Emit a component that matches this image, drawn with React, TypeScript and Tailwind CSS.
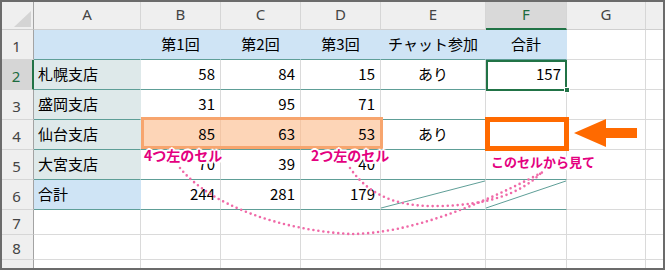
import React from 'react';

type Fill = 'none' | 'blue' | 'side' | 'peach';
type Align = 'l' | 'c' | 'r';
type C = [string, Align, Fill];

const fillCls: Record<Fill, string> = {
  none: 'bg-white border-r-[#dadada]',
  blue: 'bg-[#cfe4f5] border-r-[#cfe4f5]',
  side: 'bg-[#dee9ea] border-r-[#dee9ea]',
  peach: 'bg-[#fdd5b7] border-r-[#f2c6a6]',
};

const alignCls: Record<Align, string> = {
  l: 'justify-start pl-1',
  c: 'justify-center',
  r: 'justify-end pr-[5px]',
};

// H is only a sliver at the right edge, its letter falls outside
const cols = ['A', 'B', 'C', 'D', 'E', 'F', 'G', ''];

const rows: C[][] = [
  [['', 'l', 'blue'], ['第1回', 'c', 'blue'], ['第2回', 'c', 'blue'], ['第3回', 'c', 'blue'], ['チャット参加', 'c', 'blue'], ['合計', 'c', 'blue']],
  [['札幌支店', 'l', 'side'], ['58', 'r', 'none'], ['84', 'r', 'none'], ['15', 'r', 'none'], ['あり', 'c', 'none'], ['157', 'r', 'none']],
  [['盛岡支店', 'l', 'side'], ['31', 'r', 'none'], ['95', 'r', 'none'], ['71', 'r', 'none'], ['', 'c', 'none'], ['', 'r', 'none']],
  [['仙台支店', 'l', 'side'], ['85', 'r', 'peach'], ['63', 'r', 'peach'], ['53', 'r', 'peach'], ['あり', 'c', 'none'], ['', 'r', 'none']],
  [['大宮支店', 'l', 'side'], ['70', 'r', 'none'], ['39', 'r', 'none'], ['40', 'r', 'none'], ['', 'c', 'none'], ['', 'r', 'none']],
  [['合計', 'l', 'blue'], ['244', 'r', 'none'], ['281', 'r', 'none'], ['179', 'r', 'none'], ['', 'c', 'none'], ['', 'r', 'none']],
];

const head = 'flex items-center justify-center bg-[#efefef] border-r border-b border-r-[#d6d6d6] border-b-[#cfcfcf] text-[#444] text-[15px] font-["Noto_Sans",sans-serif]';
const rowHead = 'flex items-center justify-center bg-[#efefef] border-r border-b border-r-[#a3a3a3] border-b-[#d6d6d6] text-[#444] text-[15px] font-["Noto_Sans",sans-serif] pt-[3px]';
const plain = 'border-r border-b border-r-[#dadada] border-b-[#dadada] bg-white';
const halo = '[text-shadow:-1.5px_-1.5px_0_#fff,1.5px_-1.5px_0_#fff,-1.5px_1.5px_0_#fff,1.5px_1.5px_0_#fff,0_2px_0_#fff,0_-2px_0_#fff,2px_0_0_#fff,-2px_0_0_#fff]';
const label = `absolute font-bold leading-none text-[#e4007f] ${halo}`;

const Diagonal: React.FC = () => (
  <svg className="absolute inset-0 h-full w-full" viewBox="0 0 100 30" preserveAspectRatio="none">
    <line x1="0" y1="29" x2="100" y2="1" stroke="#5e9e97" strokeWidth="1" vectorEffect="non-scaling-stroke" />
  </svg>
);

const App: React.FC = () => {
  return (
    <div className="relative w-[665px] h-[270px] overflow-hidden bg-white font-['Noto_Sans_CJK_JP',sans-serif] text-[15px] text-black">
      <div className="grid grid-cols-[34px_107px_80px_80px_80px_105px_81px_79px_1fr] grid-rows-[30px_30px_30px_30px_30px_30px_30px_25px_25px_1fr] h-full">
        {/* corner */}
        <div className="relative bg-[#efefef] border-r border-b border-r-[#a3a3a3] border-b-[#cfcfcf]">
          <svg className="absolute left-[14px] top-[11px]" width="18" height="17" viewBox="0 0 18 17">
            <polygon points="17,0 17,16 0,16" fill="#d4d4d4" />
          </svg>
        </div>
        {cols.map((c, i) =>
          c === 'F' ? (
            <div key={i} className="flex items-center justify-center bg-[#d9d9d9] border-r border-r-[#d6d6d6] border-b-2 border-b-[#217346] text-[#1d6b3f] text-[15px] font-['Noto_Sans',sans-serif]">
              {c}
            </div>
          ) : (
            <div key={i} className={head}>{c}</div>
          )
        )}

        {rows.map((r, ri) => (
          <React.Fragment key={ri}>
            {ri === 1 ? (
              <div className="flex items-center justify-center bg-[#d6d6d6] border-r-2 border-r-[#217346] border-b border-b-[#d6d6d6] text-[#1d6b3f] text-[15px] font-['Noto_Sans',sans-serif] pt-[3px]">
                {ri + 1}
              </div>
            ) : (
              <div className={rowHead}>{ri + 1}</div>
            )}
            {r.map(([t, a, f], ci) => (
              <div
                key={ci}
                className={`relative flex items-center border-r border-b border-b-[#5e9e97] ${fillCls[f]} ${alignCls[a]}`}
              >
                {ri === 5 && ci >= 4 && <Diagonal />}
                <span className="relative">{t}</span>
              </div>
            ))}
            <div className={plain} />
            <div className={plain} />
          </React.Fragment>
        ))}

        {[7, 8].map(n => (
          <React.Fragment key={n}>
            <div className={rowHead}>{n}</div>
            {cols.map((c, i) => (
              <div key={i} className={plain} />
            ))}
          </React.Fragment>
        ))}
        <div className="flex justify-center overflow-hidden bg-[#efefef] border-r border-r-[#a3a3a3] text-[#444] text-[15px] leading-none font-['Noto_Sans',sans-serif] pt-[7px]">
          9
        </div>
        {cols.map((c, i) => (
          <div key={i} className="border-r border-r-[#dadada] bg-white" />
        ))}
      </div>

      {/* F2 active cell */}
      <div className="absolute left-[486px] top-[60px] w-[81px] h-[31px] border-2 border-[#217346]" />
      <div className="absolute left-[564px] top-[87px] w-[6px] h-[6px] bg-[#217346] border border-white" />

      {/* B4:D4 range */}
      <div className="absolute left-[141px] top-[117px] w-[242px] h-[32px] border-[3px] border-[#f7a56e]" />

      {/* F4 target */}
      <div className="absolute left-[485px] top-[117px] w-[84px] h-[34px] border-[5px] border-[#ff6a00]" />

      {/* arrow + dotted curves */}
      <svg className="absolute inset-0 pointer-events-none" width="665" height="270" viewBox="0 0 665 270">
        <polygon points="574,133 606,119 606,128 637,128 637,138 606,138 606,147" fill="#ff6a00" />
        <path
          d="M180 168 C210 205 280 230 350 234 C410 234 480 205 543 172"
          fill="none"
          stroke="#f06aa8"
          strokeWidth="2.6"
          strokeLinecap="round"
          strokeDasharray="0 5"
        />
        <path
          d="M350 168 C372 200 405 207 440 206 C485 205 520 195 542 172"
          fill="none"
          stroke="#f06aa8"
          strokeWidth="2.6"
          strokeLinecap="round"
          strokeDasharray="0 5"
        />
      </svg>

      {/* labels */}
      <div className={`${label} left-[144px] top-[148px] text-[14px]`}>4つ左のセル</div>
      <div className={`${label} left-[311px] top-[148px] text-[14px]`}>2つ左のセル</div>
      <div className={`${label} left-[491px] top-[155px] text-[13px]`}>このセルから見て</div>

      {/* window frame */}
      <div className="absolute inset-0 border-2 border-[#6b6b6b] pointer-events-none" />
    </div>
  );
};

export default App;
